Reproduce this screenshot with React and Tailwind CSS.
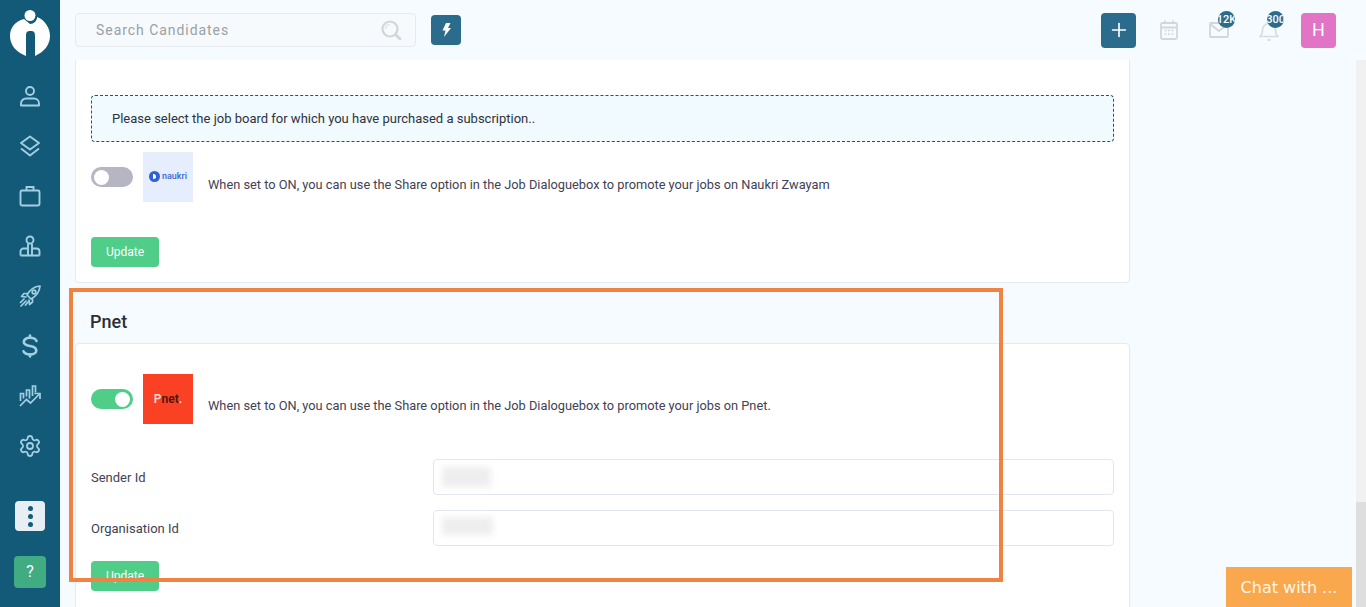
import React from "react";
import { Settings, Plus } from "lucide-react";

// Sidebar icons that lucide has no match for
const PersonIcon = () => (
  <svg width="22" height="22" viewBox="0 0 22 22" fill="none" stroke="currentColor" strokeWidth="1.9">
    <circle cx="11" cy="6" r="4" />
    <path d="M2 20.5v-2a5 5 0 0 1 5-5h8a5 5 0 0 1 5 5v2z" strokeLinejoin="round" />
  </svg>
);

const LayersIcon = () => (
  <svg width="22" height="22" viewBox="0 0 22 22" fill="none" stroke="currentColor" strokeWidth="1.9" strokeLinejoin="round">
    <path d="M11 1.500l9 6.500-9 6.500-9-6.500z" />
    <path d="M2 13.500l9 7 9-7" />
  </svg>
);

const CaseIcon = () => (
  <svg width="22" height="22" viewBox="0 0 22 22" fill="none" stroke="currentColor" strokeWidth="1.9">
    <rect x="1.500" y="5.500" width="19" height="15" rx="1.500" />
    <path d="M7.500 5.500v-3.500h7v3.500" />
  </svg>
);

const OrgIcon = () => (
  <svg width="22" height="22" viewBox="0 0 22 22" fill="none" stroke="currentColor" strokeWidth="1.9">
    <circle cx="11" cy="5" r="3.500" />
    <path d="M9 9v11M13 9v11M1.500 20.500h19M1.500 20.500v-4a3 3 0 0 1 3-3h4M20.500 20.500v-4a3 3 0 0 0-3-3h-4" />
  </svg>
);

const RocketIcon = () => (
  <svg width="22" height="22" viewBox="0 0 22 22" fill="none" stroke="currentColor" strokeWidth="1.700" strokeLinejoin="round" strokeLinecap="round">
    <path d="M21 1c-6 .5-10 3.500-13 9l4 4c5.500-3 8.500-7 9-13z" />
    <circle cx="15" cy="7" r="1.800" />
    <path d="M8 8.500H5l-2.500 3 4.500.5M13.500 14v3l-3 2.500-.5-4.500" />
    <path d="M5 14l-3.500 3.500M7 16l-5 5M9 17l-2.500 3" />
  </svg>
);

const DollarIcon = () => (
  <svg width="22" height="24" viewBox="0 0 22 24" fill="none" stroke="currentColor" strokeWidth="2.600" strokeLinecap="round">
    <path d="M17.500 7C16.500 4.800 14 3.800 11 3.800 7.500 3.800 4.800 5.300 4.800 8c0 3 3.200 3.500 6.200 4s6.300 1.500 6.300 4.500c0 2.500-2.800 4-6.300 4-3 0-5.500-1-6.500-3.200" />
    <path d="M11 1.500v2M11 20.500v2" />
  </svg>
);

const ChartIcon = () => (
  <svg width="22" height="22" viewBox="0 0 22 22" fill="none" stroke="currentColor" strokeWidth="1.700">
    <path d="M1 21l6.500-6.500 4 3.500 9-9" />
    <path d="M15.500 8.500h5.500v5.500" />
    <path d="M1.500 16V8.500h3v5M7.500 11.500V5h3v8.500M13.500 11V1h3v6.500" />
  </svg>
);

const LogoMark = () => (
  <svg width="40" height="46" viewBox="0 0 40 46">
    <path d="M14 9C5 11 0 18 0 26c0 9 6 16 16 20V26c0-4 1-5 4.500-5s4.500 1 4.500 5v20c9-4 15-11 15-20 0-8-5-16-13-19 0 4-3 7-7 7z" fill="#fff" />
    <circle cx="20" cy="5.500" r="5.500" fill="#fff" />
    <path d="M26 6.500a6 6 0 0 1-6 6" fill="none" stroke="#135a78" strokeWidth="1.500" />
  </svg>
);

// Header icons
const SearchIcon = () => (
  <svg width="21" height="21" viewBox="0 0 21 21" fill="none">
    <circle cx="9" cy="9" r="7.500" stroke="#d2d6d6" strokeWidth="2.200" />
    <path d="M4.500 9a4.500 4.500 0 0 1 4.500-4.500" stroke="#e2e5e5" strokeWidth="1.500" />
    <path d="M15 15l4 4" stroke="#d2d6d6" strokeWidth="2.800" strokeLinecap="round" />
  </svg>
);

const BoltIcon = () => (
  <svg width="9" height="14" viewBox="0 0 9 14" fill="#fff">
    <path d="M4 0h4.500L6 5h3L2 14l1.500-6.500H0.500z" />
  </svg>
);

const CalendarIcon = () => (
  <svg width="18" height="20" viewBox="0 0 18 20" fill="none" stroke="#d3d6da" strokeWidth="1.800">
    <rect x="1" y="3" width="16" height="16" rx="1.500" />
    <path d="M1 7.500h16M5 0.500v3M13 0.500v3" />
    <path d="M4.500 10.500h2M8 10.500h2M11.500 10.500h2M4.500 14h2M8 14h2M11.500 14h2" strokeWidth="1.700" />
  </svg>
);

const MailIcon = () => (
  <svg width="20" height="16" viewBox="0 0 20 16" fill="none" stroke="#d3d6da" strokeWidth="1.800">
    <rect x="1" y="1" width="18" height="14" rx="1" />
    <path d="M1 2l9 7 9-7" />
  </svg>
);

const BellIcon = () => (
  <svg width="20" height="21" viewBox="0 0 20 21" fill="none" stroke="#d9dce0" strokeWidth="1.700">
    <path d="M1 16.500c2-1.500 2.500-3 2.500-6.500a6.500 6.500 0 0 1 13 0c0 3.500.5 5 2.500 6.500z" strokeLinejoin="round" />
    <path d="M8.500 20h3" strokeWidth="2" />
  </svg>
);

const navIcons = [
  <PersonIcon key="person" />,
  <LayersIcon key="layers" />,
  <CaseIcon key="case" />,
  <OrgIcon key="org" />,
  <RocketIcon key="rocket" />,
  <DollarIcon key="dollar" />,
  <ChartIcon key="chart" />,
  <Settings key="settings" size={24} strokeWidth={1.8} />,
];

const Sidebar = () => (
  <aside className="w-[60px] h-full shrink-0 bg-[#135a78] flex flex-col items-center">
    <div className="pt-[10px] h-[71px]">
      <LogoMark />
    </div>
    <div className="flex flex-col items-center text-[#a3cfe3]">
      {navIcons.map((icon) => (
        <div key={icon.key} className="h-[50px] w-full flex items-center justify-center">
          {icon}
        </div>
      ))}
    </div>
    <button className="mt-[30px] w-[30px] h-[30px] rounded bg-[#e8eff4] flex flex-col items-center justify-center gap-[3px]">
      <span className="w-[5px] h-[5px] rounded-full bg-[#135a78]" />
      <span className="w-[5px] h-[5px] rounded-full bg-[#135a78]" />
      <span className="w-[5px] h-[5px] rounded-full bg-[#135a78]" />
    </button>
    <button className="mt-[25px] w-8 h-8 rounded bg-[#41ac82] text-white text-base">?</button>
  </aside>
);

const Badge = ({ children, className }) => (
  <span className={`absolute w-[17px] h-[17px] rounded-full bg-[#2b6c8c] text-white text-[11px] font-medium leading-[17px] flex items-center justify-center overflow-hidden ${className}`}>
    {children}
  </span>
);

const Topbar = () => (
  <header className="h-[60px] shrink-0 flex items-center bg-[#f6fbff]">
    <div className="ml-[15px] w-[341px] h-[34px] rounded border border-[#e6ebef] bg-[#f7fafd] flex items-center pl-5 pr-[13px] text-sm text-[#9aa0a6] tracking-[0.95px]">
      <span className="flex-1">Search Candidates</span>
      <SearchIcon />
    </div>
    <button className="ml-[15px] w-[30px] h-[30px] rounded bg-[#2b6c8c] flex items-center justify-center">
      <BoltIcon />
    </button>
    <div className="ml-auto mr-[30px] flex items-center">
      <button className="w-[35px] h-[35px] rounded bg-[#2b6c8c] text-white flex items-center justify-center">
        <Plus size={22} strokeWidth={1.8} />
      </button>
      <div className="relative ml-[23px] w-[20px] flex justify-center">
        <CalendarIcon />
      </div>
      <div className="relative ml-[30px] w-[20px] flex justify-center">
        <MailIcon />
        <Badge className="-top-[11px] left-[9px]">12K</Badge>
      </div>
      <div className="relative ml-[30px] w-[20px] flex justify-center">
        <BellIcon />
        <Badge className="-top-[9px] left-[8px]">300</Badge>
      </div>
      <div className="ml-[22px] w-[35px] h-[35px] rounded bg-[#e174c4] text-white text-lg flex items-center justify-center">H</div>
    </div>
  </header>
);

const Toggle = ({ on }) => (
  <span className={`w-[42px] h-5 rounded-full p-[3px] flex ${on ? "bg-[#50cd89] justify-end" : "bg-[#b5b5c3] justify-start"}`}>
    <span className="w-[15px] h-[15px] rounded-full bg-white" />
  </span>
);

const UpdateButton = () => (
  <button className="w-[68px] h-[30px] rounded bg-[#50cd89] text-white text-xs">Update</button>
);

const BoardRow = ({ on, logo, text, textTop }) => (
  <div className="flex">
    <div className="pt-[15px]">
      <Toggle on={on} />
    </div>
    <div className="ml-[10px]">{logo}</div>
    <p className={`ml-[15px] text-[12.8px] leading-[14px] text-[#3f4254] whitespace-nowrap ${textTop}`}>{text}</p>
  </div>
);

const NaukriLogo = () => (
  <div className="w-[50px] h-[50px] bg-[#e6edfc] flex items-center justify-center gap-[2px] pb-[2px]">
    <span className="w-[11px] h-[11px] rounded-full bg-[#2f62d9] flex items-center justify-center">
      <span className="w-[3px] h-[5px] rounded-r-full bg-white" />
    </span>
    <span className="text-[9px] font-medium leading-none text-[#3a68d4]">naukri</span>
  </div>
);

const PnetLogo = () => (
  <div className="w-[50px] h-[50px] bg-[#fb4124] flex items-center justify-center text-xs font-semibold leading-none">
    <span className="text-[#ffd9d0]">P</span>
    <span className="text-[#4a1512]">net</span>
    <span className="text-[#ffd9d0]">.</span>
  </div>
);

const Field = ({ label, blur }) => (
  <div className="flex items-center h-9">
    <label className="w-[342px] shrink-0 pt-[2px] text-[13px] text-[#3f4254]">{label}</label>
    <div className="flex-1 h-9 rounded border border-[#e4e6ef] bg-white flex items-center pl-2">
      <span className={`bg-[#eeeeee] blur-[3px] ${blur}`} />
    </div>
  </div>
);

const App = () => (
  <div className="relative w-[1366px] h-[607px] overflow-hidden flex bg-[#f6fbff] font-['Roboto',sans-serif]">
    <Sidebar />
    <div className="flex-1 min-w-0 h-full flex flex-col">
      <Topbar />
      <div className="flex-1 min-h-0 flex overflow-hidden">
        <main className="flex-1 min-w-0 pl-[15px]">
          <section className="w-[1055px] h-[223px] bg-white border border-t-0 border-[#e8e9ef] rounded-b px-[15px] pt-[35px]">
            <div className="h-[47px] rounded border border-dashed border-[#135a78] bg-[#f1faff] flex items-center pl-5 text-[13px] text-[#2d3340]">
              Please select the job board for which you have purchased a subscription..
            </div>
            <div className="mt-[10px]">
              <BoardRow
                logo={<NaukriLogo />}
                textTop="mt-[26px]"
                text="When set to ON, you can use the Share option in the Job Dialoguebox to promote your jobs on Naukri Zwayam"
              />
            </div>
            <div className="mt-[35px]">
              <UpdateButton />
            </div>
          </section>
          <h2 className="mt-[29px] ml-[15px] h-5 text-lg font-medium leading-5 text-[#2b2e34]">Pnet</h2>
          <section className="mt-[11px] w-[1055px] h-[300px] bg-white border border-[#e8e9ef] rounded px-[15px] pt-[30px]">
            <BoardRow
              on
              logo={<PnetLogo />}
              textTop="mt-[25px]"
              text="When set to ON, you can use the Share option in the Job Dialoguebox to promote your jobs on Pnet."
            />
            <div className="mt-[35px] flex flex-col gap-[15px]">
              <Field label="Sender Id" blur="w-[49px] h-5" />
              <Field label="Organisation Id" blur="w-[51px] h-[18px] mb-[5px]" />
            </div>
            <div className="mt-[15px]">
              <UpdateButton />
            </div>
          </section>
        </main>
        <div className="w-[10px] shrink-0 h-full bg-[#f1f1f1] flex flex-col justify-end">
          <div className="h-[105px] bg-[#dedede]" />
        </div>
      </div>
    </div>
    {/* annotation box drawn over the page */}
    <div className="absolute left-[69px] top-[288px] w-[934px] h-[294px] border-4 border-[#f08341] pointer-events-none" />
    {/* chat widget */}
    <div className="absolute right-[14px] bottom-0 w-[126px] h-10 pt-[2px] bg-[#f9a84d] text-[#fff6e6] text-base font-['DejaVu_Sans',sans-serif] flex items-center justify-center">
      Chat with ...
    </div>
  </div>
);

export default App;
